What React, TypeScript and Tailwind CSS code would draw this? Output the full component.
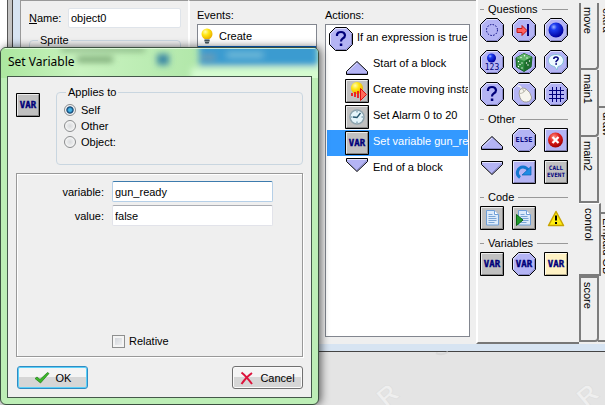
import type { ReactNode } from "react";

const INK = "#00007a";
const LILAC = "#b4b4f4";

type FrameProps = { shape?: "oct" | "square" | "none"; fill?: string; title: string; children?: ReactNode };

function Icon({ shape = "square", fill = "#c0c0c0", title, children }: FrameProps) {
  return (
    <svg viewBox="0 0 24 24" className="block size-6 shrink-0" role="img" aria-label={title}>
      {shape === "oct" && (
        <>
          <path d="M6.5 .5h11l6 6v11l-6 6h-11l-6-6v-11z" fill={fill} stroke="#000" />
          <path d="M1.5 17V7L7 1.5h10" fill="none" stroke="#e2e2ff" />
          <path d="M22.5 7v10L17 22.5H7" fill="none" stroke="#8585c4" />
        </>
      )}
      {shape === "square" && (
        <>
          <path d="M.5 .5h23v23H.5z" fill={fill} stroke="#000" />
          <path d="M1.5 22V1.5H22" fill="none" stroke="#fff" strokeOpacity=".7" />
          <path d="M22.5 2v20.500H2" fill="none" stroke="#000" strokeOpacity=".3" />
        </>
      )}
      {children}
    </svg>
  );
}

function VarIcon({ shape, fill }: { shape?: "oct" | "square"; fill?: string }) {
  return (
    <Icon shape={shape} fill={fill} title="Variable">
      <text
        x="12"
        y="15"
        textAnchor="middle"
        fill={INK}
        stroke={INK}
        strokeWidth=".4"
        className="font-['DejaVu_Sans_Mono',monospace] text-[9px] font-bold"
      >
        VAR
      </text>
    </Icon>
  );
}

function QuestionIcon() {
  return (
    <Icon shape="oct" fill={LILAC} title="Expression">
      <path d="M8 9V7.500Q8.500 5 12 5t4 3.200q0 2-2.300 3.300Q12 12.500 12 14.500" fill="none" stroke={INK} strokeWidth="2.200" />
      <path d="M10.800 16.500h2.500v2.500h-2.500z" fill={INK} />
    </Icon>
  );
}

const UpIcon = () => (
  <Icon shape="none" title="Start block">
    <path d="M12 8.500l10.500 10v3h-21v-3z" fill={LILAC} stroke="#000" />
    <path d="M12 10L2.500 19" fill="none" stroke="#e2e2ff" />
    <path d="M2 20.500h20" stroke="#8585c4" />
  </Icon>
);
const DownIcon = () => (
  <Icon shape="none" title="End block">
    <path d="M1.500 1.500h21v3l-10.500 10-10.500-10z" fill={LILAC} stroke="#000" />
    <path d="M2 2.500h20" stroke="#e2e2ff" />
    <path d="M12 13l9.500-9" stroke="#8585c4" />
  </Icon>
);

const Page = () => (
  <>
    <path d="M6.500 4.500h8l4 4v10.500h-12z" fill="#dcebfb" stroke="#6f9fd8" />
    <path d="M14.500 4.500v4h4" fill="#fff" stroke="#6f9fd8" />
    <path d="M8.500 8.500h4M8.500 10.500h7M8.500 12.500h8M8.500 14.500h8M8.500 16.500h6" stroke="#7aa5d6" />
  </>
);

function Defs() {
  return (
    <svg className="absolute size-0" aria-hidden="true">
      <defs>
        <radialGradient id="blueBall" cx=".35" cy=".3" r=".7">
          <stop offset="0" stopColor="#a0b8ff" />
          <stop offset=".3" stopColor="#1c3cf0" />
          <stop offset="1" stopColor="#0000a0" />
        </radialGradient>
        <radialGradient id="redBall" cx=".4" cy=".3" r=".7">
          <stop offset="0" stopColor="#ff9080" />
          <stop offset=".5" stopColor="#e02020" />
          <stop offset="1" stopColor="#a00000" />
        </radialGradient>
        <radialGradient id="yellowBall" cx=".35" cy=".3" r=".7">
          <stop offset="0" stopColor="#fffbb0" />
          <stop offset=".45" stopColor="#ffe610" />
          <stop offset="1" stopColor="#eab000" />
        </radialGradient>
      </defs>
    </svg>
  );
}

const questions = (
  <>
    <Icon shape="oct" fill={LILAC} title="Collision">
      <circle cx="12" cy="12" r="5.500" fill="none" stroke={INK} strokeDasharray="1.500 1.380" />
    </Icon>
    <Icon shape="oct" fill={LILAC} title="Object meeting">
      <path d="M5 10.500h5V7.500l5 5-5 5v-3H5z" fill="#ff6060" stroke="#c01818" />
      <path d="M16 6v12" stroke={INK} strokeWidth="2" />
    </Icon>
    <Icon shape="oct" fill={LILAC} title="Instance">
      <circle cx="12" cy="12" r="7.500" fill="url(#blueBall)" />
    </Icon>
    <Icon shape="oct" fill={LILAC} title="Instance count">
      <circle cx="11.500" cy="8" r="4.500" fill="url(#blueBall)" />
      <text x="12" y="20" textAnchor="middle" fill={INK} className="font-['DejaVu_Sans_Mono',monospace] text-[8px]">
        123
      </text>
    </Icon>
    <Icon shape="oct" fill={LILAC} title="Chance">
      <path d="M4 8l8-4.500 8 3.500-1 10-7 4.500L4.500 17z" fill="#2f8c40" stroke="#155a24" />
      <path d="M4 8l8-4.500 8 3.500-7.500 4z" fill="#62b56c" />
      <path d="M12.500 11l7.500-4-1 10-7 4.500z" fill="#1c6c2c" />
      <g fill="#fff">
        <circle cx="9" cy="7.500" r=".7" /><circle cx="12.500" cy="5.800" r=".7" /><circle cx="15" cy="8" r=".7" />
        <circle cx="6.500" cy="11.500" r=".7" /><circle cx="10" cy="13" r=".7" /><circle cx="8" cy="14.500" r=".7" />
        <circle cx="6.500" cy="16.500" r=".7" /><circle cx="10" cy="18" r=".7" /><circle cx="14.500" cy="13" r=".7" />
        <circle cx="17.500" cy="11" r=".7" /><circle cx="16" cy="15" r=".7" />
      </g>
    </Icon>
    <Icon shape="oct" fill={LILAC} title="Ask question">
      <path d="M12 4.500c4.500 0 7.500 2.500 7.500 6s-2.500 5.500-5.500 6l-1 3.500-2.500-3.500c-3.500-.5-6-2.500-6-6s3-6 7.500-6z" fill="#eefaff" stroke="#83bfd8" />
      <path d="M9.800 9q0-2 2.200-2t2.200 1.800q0 1-2.100 2.500v1" fill="none" stroke={INK} strokeWidth="1.500" />
      <path d="M11.300 13.300h1.700v1.500h-1.700z" fill={INK} />
    </Icon>
    <QuestionIcon />
    <Icon shape="oct" fill={LILAC} title="Mouse button">
      <path d="M5.500 4.500Q8 3 9.500 6.500" fill="none" stroke="#eee" strokeWidth="1.500" />
      <path d="M7.500 8.500q2.500-4 6-2 5.500 4 6 8.500 0 4.500-5 5-4.500.5-6.500-4.500-1.500-4-.5-7z" fill="#f6f5ee" stroke="#8f8d82" strokeWidth=".8" />
      <path d="M7.500 11.500q4.500 0 6.500-4.500M10.500 6.500l1.500 3.500" fill="none" stroke="#aaa89c" strokeWidth=".8" />
    </Icon>
    <Icon shape="oct" fill={LILAC} title="Grid">
      <path d="M8.500 5v15M12.500 5v15M16.500 5v15M5 8.500h15M5 12.500h15M5 16.500h15" stroke={INK} />
    </Icon>
  </>
);

const other = (
  <>
    <UpIcon />
    <Icon shape="oct" fill={LILAC} title="Else">
      <text x="12" y="14" textAnchor="middle" fill={INK} className="font-['DejaVu_Sans_Mono',monospace] text-[7px] font-bold">
        ELSE
      </text>
    </Icon>
    <Icon fill={LILAC} title="Exit">
      <circle cx="11.500" cy="12" r="7.500" fill="url(#redBall)" />
      <path d="M8.500 9l6 6M14.500 9l-6 6" stroke="#fff" strokeWidth="2.300" />
    </Icon>
    <DownIcon />
    <Icon fill={LILAC} title="Repeat">
      <path d="M8 17.500Q4.500 15 5.500 11.500 7 7 11 7q3.500 0 6 4" fill="none" stroke="#1478d0" strokeWidth="3" />
      <path d="M19 6.500V15h-9z" fill="#1e8ce4" stroke="#0a62b4" strokeWidth=".7" />
    </Icon>
    <Icon title="Call event">
      <text textAnchor="middle" fill={INK} className="font-['DejaVu_Sans_Mono',monospace] text-[6px] font-bold">
        <tspan x="12" y="10">CALL</tspan>
        <tspan x="12" y="17">EVENT</tspan>
      </text>
    </Icon>
  </>
);

const code = (
  <>
    <Icon title="Execute code"><Page /></Icon>
    <Icon title="Execute script">
      <Page />
      <path d="M4.500 8.500v11l6.500-5.500z" fill="#1f9a2c" stroke="#0b6414" />
    </Icon>
    <Icon shape="none" title="Comment">
      <path d="M12 5.500L19.500 19.500h-15z" fill="#ffee10" stroke="#c8a400" strokeWidth="1.500" strokeLinejoin="round" />
      <path d="M12 9.500v5M12 16v2" stroke="#000" strokeWidth="2" />
    </Icon>
  </>
);

const variables = (
  <>
    <VarIcon />
    <VarIcon shape="oct" fill={LILAC} />
    <VarIcon fill="#fff2c4" />
  </>
);

const palette = [
  { name: "Questions", icons: questions },
  { name: "Other", icons: other },
  { name: "Code", icons: code },
  { name: "Variables", icons: variables },
];

function Palette() {
  return (
    <section className="flex w-[103px] shrink-0 flex-col gap-1 border-b-2 border-l-2 border-b-[#777] border-l-white pl-0.5">
      {palette.map((group) => (
        <div key={group.name}>
          <h2 className="flex h-[18px] w-[88px] items-center gap-1 leading-[18px]">
            <span className="h-px w-1 bg-[#999]" />
            {group.name}
            <span className="h-px flex-1 bg-[#999]" />
          </h2>
          <div className="grid w-[88px] grid-cols-3 gap-2">{group.icons}</div>
        </div>
      ))}
    </section>
  );
}

const tabBase = "flex items-center border-b-2 border-r-2 border-[#7c7c7c] pt-1 text-left leading-[14px] [writing-mode:vertical-rl]";

function Tabs() {
  return (
    <nav className="flex w-[26px] shrink-0 overflow-hidden">
      <div className="flex w-[19px] shrink-0 flex-col pt-[3px]">
        <button className={`${tabBase} h-[67px] w-5 rounded-br-sm border-l-2 pr-0.5`}>move</button>
        <button className={`${tabBase} h-[67px] w-5 rounded-br-sm border-l-2 pr-0.5`}>main1</button>
        <button className={`${tabBase} h-[66px] w-5 border-b-0 border-l-2 pr-0.5`}>main2</button>
        <button className={`${tabBase} z-10 h-[73px] w-[22px] border-b-0 border-t border-t-white bg-[#efefef] pt-0.5`}>control</button>
        <button className={`${tabBase} h-[66px] w-5 rounded-br-sm border-l-2 border-t-2 pr-0.5`}>score</button>
      </div>
      <div className="flex w-5 shrink-0 flex-col">
        <button className={`${tabBase} h-[108px] w-5 pt-2`}>extra</button>
        <button className={`${tabBase} h-[106px] w-5`}>draw</button>
        <button className={`${tabBase} h-[128px] w-5`}>Empaid GB</button>
      </div>
    </nav>
  );
}

const actions = [
  { label: "If an expression is true", icon: <QuestionIcon />, nested: false, selected: false },
  { label: "Start of a block", icon: <UpIcon />, nested: true, selected: false },
  {
    label: "Create moving instance",
    icon: (
      <Icon title="Create moving">
        <circle cx="12" cy="9" r="6" fill="url(#yellowBall)" />
        <path d="M15.500 9.500l6 6-6 6z" fill="#ff6a5a" stroke="#e01010" />
        <path d="M7 14v3M10 13v5M13 12v7" stroke="#f01818" strokeWidth="1.800" />
      </Icon>
    ),
    nested: true,
    selected: false,
  },
  {
    label: "Set Alarm 0 to 20",
    icon: (
      <Icon title="Alarm">
        <circle cx="12" cy="12" r="7" fill="#e4f4fa" stroke="#8ea4ae" strokeWidth="1.500" />
        <path d="M12 6v1.500M12 16.500V18M6 12h1.500M16.500 12H18" stroke="#57839a" />
        <path d="M15.500 8L12 12.500l-4-.5" fill="none" stroke="#26566e" strokeWidth="1.300" />
      </Icon>
    ),
    nested: true,
    selected: false,
  },
  { label: "Set variable gun_ready to false", icon: <VarIcon />, nested: true, selected: true },
  { label: "End of a block", icon: <DownIcon />, nested: true, selected: false },
];

function ObjectWindow() {
  return (
    <main className="flex h-[352px]">
      <div className="w-[7px] shrink-0 bg-white" />
      <div className="w-[5px] shrink-0 border-l border-[#555] bg-[#c4c4c4]" />
      <div className="flex min-w-0 flex-1 border-b border-l border-b-[#444] border-l-[#444] bg-[#d7e4f2] pb-[7px] pl-[7px]">
        <div className="flex min-w-0 flex-1 bg-[#efefef]">
          <section className="w-[168px] shrink-0 border-l border-t border-[#999] pl-2 pr-[7px] pt-[7px]">
            <div className="flex items-center justify-between">
              <label htmlFor="name"><u>N</u>ame:</label>
              <input id="name" defaultValue="object0" className="h-5 w-[113px] rounded-xs border border-[#dfe4ea] bg-white px-0.5 outline-none" />
            </div>
            <fieldset className="mt-1 h-20 rounded-sm border border-[#ccd8e2] pl-2">
              <legend className="px-0.5 leading-4">Sprite</legend>
            </fieldset>
          </section>
          <section className="flex min-w-0 flex-1 gap-2 border-l-2 border-t border-l-white border-t-[#999] pb-[7px] pl-[7px] pr-[6px]">
            <div className="flex w-[120px] shrink-0 flex-col">
              <h2 className="pt-1.5 leading-[17px]">Events:</h2>
              <ul className="flex-1 border border-[#82868f] bg-white">
                <li className="flex h-[21px] items-center pl-[3px]">
                  <svg viewBox="0 0 12 17" className="mt-0.5 h-[17px] w-3" aria-hidden="true">
                    <circle cx="6" cy="6" r="5.500" fill="url(#yellowBall)" />
                    <path d="M3.500 11h5v2.500l-1 2.500h-3l-1-2.500z" fill="#8c9aa0" />
                    <path d="M3.500 12.500h5M4 14.500h4" stroke="#46525a" />
                  </svg>
                  <span className="pl-1.5">Create</span>
                </li>
                <li className="h-5 bg-[#0a64c8]" />
              </ul>
            </div>
            <div className="flex min-w-0 flex-1 flex-col">
              <h2 className="pt-1.5 leading-[17px]">Actions:</h2>
              <ul className="flex-1 overflow-hidden border border-[#82868f] bg-white p-px">
                {actions.map((a) => (
                  <li
                    key={a.label}
                    className={`flex h-[26px] gap-1 overflow-hidden whitespace-nowrap py-px leading-5 ${a.nested ? "pl-[18px]" : "pl-0.5"} ${a.selected ? "bg-[#3399ff] text-white" : ""}`}
                  >
                    {a.icon}
                    <span>{a.label}</span>
                  </li>
                ))}
              </ul>
            </div>
          </section>
          <Palette />
          <Tabs />
        </div>
      </div>
    </main>
  );
}

const buttonBase = "flex h-[23px] w-[71px] items-center justify-center gap-1.5 rounded-[3px] border bg-linear-to-b from-[#f4f4f4] from-50% to-[#d6d6d6] to-50%";
const fieldBase = "h-[21px] w-[161px] rounded-xs border bg-white px-0.5 outline-none";

function SetVariableDialog() {
  return (
    <div
      role="dialog"
      aria-labelledby="dialog-title"
      className="absolute left-0 top-[47px] w-[319px] overflow-hidden rounded-md border border-[#3c5040] bg-[#bdeeb6] px-1.5 pb-1.5 shadow-[2px_0_8px_rgba(0,0,0,0.6)]"
    >
      <svg className="absolute left-0 top-0 h-[30px] w-full" aria-hidden="true">
        <defs>
          <filter id="glass" x="-20%" y="-60%" width="140%" height="220%">
            <feGaussianBlur stdDeviation="3" />
          </filter>
          <linearGradient id="glassFill" x2="1">
            <stop offset="0" stopColor="#ace79f" />
            <stop offset=".25" stopColor="#c9f3c0" />
            <stop offset=".6" stopColor="#b3e8ab" />
            <stop offset="1" stopColor="#d4fbd0" />
          </linearGradient>
        </defs>
        <rect width="100%" height="30" fill="url(#glassFill)" />
        <g filter="url(#glass)">
          <rect x="60" y="0" width="84" height="3" fill="#6b9468" />
          <rect x="76" y="9" width="36" height="5" fill="#6f9c6b" />
          <rect x="156" y="6" width="12" height="11" fill="#3b88a4" />
          <rect x="190" y="20" width="140" height="14" fill="#d6fcd0" />
          <rect x="198" y="-6" width="119" height="24" fill="#3b9bd0" />
          <rect x="200" y="7" width="14" height="5" fill="#6f9caa" />
          <rect x="226" y="5" width="36" height="4" fill="#7cc5dc" />
        </g>
        <path d="M4 .5h311" stroke="#e8ffe4" strokeOpacity=".8" />
      </svg>
      <h1 id="dialog-title" className="relative flex h-[28px] items-center pl-px font-['Noto_Sans','Open_Sans',sans-serif] text-[12px]">
        Set Variable
      </h1>
      <form className="relative border border-[#44584a] bg-[#efefef] px-2 pb-2 pt-[9px]" onSubmit={(e) => e.preventDefault()}>
        <div className="flex h-[79px] gap-4">
          <div className="pt-[7px]"><VarIcon /></div>
          <fieldset className="flex-1 rounded-sm border border-[#c9d6e0] pl-[7px]">
            <legend className="ml-0.5 px-0.5 leading-3">Applies to</legend>
            <div className="flex flex-col pt-1">
              {["Self", "Other", "Object:"].map((name, i) => (
                <label key={name} className="flex h-4 items-center gap-[5px]">
                  <input
                    type="radio"
                    name="target"
                    defaultChecked={i === 0}
                    className="size-3 appearance-none rounded-full border border-[#8a8c8e] bg-radial from-[#d8dadc] to-white shadow-[inset_0_0_0_1px_#f4f4f4] checked:from-[#46b4e8] checked:from-20% checked:via-[#10406c] checked:via-45% checked:to-[#e8eef2] checked:to-60%"
                  />
                  {name}
                </label>
              ))}
            </div>
          </fieldset>
        </div>
        <div className="mt-2 flex h-[184px] flex-col justify-between border border-[#999] pb-[7px] pt-[7px] shadow-[inset_1px_1px_0_#fff,1px_1px_0_#fff]">
          <div className="grid grid-cols-[87px_1fr] items-center gap-x-2 gap-y-[3px]">
            <label htmlFor="variable" className="text-right">variable:</label>
            <input id="variable" defaultValue="gun_ready" className={`${fieldBase} border-[#b5cfe7] border-t-[#3d7bad]`} />
            <label htmlFor="value" className="text-right">value:</label>
            <input id="value" defaultValue="false" className={`${fieldBase} border-[#e2e3ea] border-t-[#abadb3]`} />
          </div>
          <label className="ml-[95px] flex items-center gap-1">
            <input type="checkbox" className="size-[13px] appearance-none border border-[#8e8f8f] bg-linear-to-br from-[#cbcfd5] to-[#f6f6f6] shadow-[inset_0_0_0_2px_#f4f4f4]" />
            Relative
          </label>
        </div>
        <div className="mt-[9px] flex justify-between pl-px">
          <button type="submit" className={`${buttonBase} border-[#2f8cc4] shadow-[inset_0_0_0_1px_#5bd0f8]`}>
            <svg viewBox="0 0 16 13" className="h-[13px] w-4" aria-hidden="true">
              <path d="M1 7.500l2-1.500 3 2.500L13.500 1.500l1.500 1L6.500 12z" fill="#3cb828" stroke="#1e7c18" strokeWidth=".7" />
            </svg>
            OK
          </button>
          <button type="button" className={`${buttonBase} border-[#707070] shadow-[inset_0_0_0_1px_#fafafa]`}>
            <svg viewBox="0 0 14 14" className="size-3.5" aria-hidden="true">
              <path d="M1.500 1.500Q6 5 12 13M12 2Q6 6 1.500 13" fill="none" stroke="#dc143c" strokeWidth="2" />
            </svg>
            Cancel
          </button>
        </div>
      </form>
    </div>
  );
}

export default function App() {
  return (
    <div className="relative min-h-screen overflow-hidden bg-[#e4e4e4] font-['Liberation_Sans',Arial,sans-serif] text-[11px] leading-4 text-black">
      <Defs />
      <svg className="absolute bottom-0 left-0 h-[54px] w-full" aria-hidden="true">
        <g fill="#efefef" stroke="#dcdcdc" strokeWidth=".5" className="text-[26px] font-bold">
          <text transform="translate(386 57) rotate(-40)">R</text>
          <text transform="translate(586 57) rotate(-40)">R</text>
        </g>
        <path d="M436 2q6 3 12-1" fill="none" stroke="#d8d8d8" strokeWidth="2" />
      </svg>
      <ObjectWindow />
      <SetVariableDialog />
    </div>
  );
}
